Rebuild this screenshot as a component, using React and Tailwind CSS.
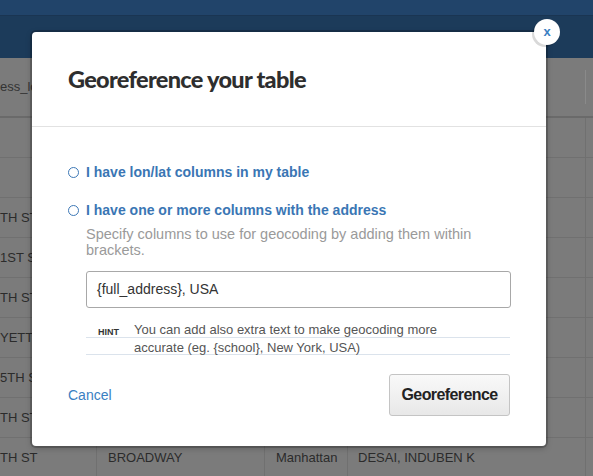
import React from "react";

const rows = [
  { a: "", b: "", c: "", d: "" },
  { a: "", b: "", c: "", d: "" },
  { a: "TH ST", b: "", c: "", d: "" },
  { a: "1ST ST", b: "", c: "", d: "" },
  { a: "TH ST", b: "", c: "", d: "" },
  { a: "YETTE", b: "", c: "", d: "" },
  { a: "5TH ST", b: "", c: "", d: "" },
  { a: "TH ST", b: "", c: "", d: "" },
  { a: "TH ST", b: "BROADWAY", c: "Manhattan", d: "DESAI, INDUBEN K" },
];

function Radio({ label }) {
  return (
    <label className="flex items-center gap-[7px] h-[20px]">
      <span className="w-[11px] h-[11px] rounded-full border-[1.5px] border-[#3d78b6] bg-white shrink-0" />
      <span className="text-[14px] font-bold text-[#3a76b4]">{label}</span>
    </label>
  );
}

export default function App() {
  return (
    <div
      className="relative w-[593px] h-[476px] overflow-hidden bg-[#7b7b7b]"
      style={{ fontFamily: '"Liberation Sans", Arial, Helvetica, sans-serif' }}
    >
      {/* top bar */}
      <div className="h-[58px] flex flex-col">
        <div className="h-[16px] bg-[#21446a] border-b border-[#1a3552]" />
        <div className="flex-1 bg-[#1c3b5a]" />
      </div>

      {/* table */}
      <div className="grid grid-cols-[97px_168px_83px_238px_1fr]">
        <div className="col-span-5 grid grid-cols-[97px_168px_83px_238px_1fr] h-[60px] border-b-2 border-[#6a6a6a]">
          <div className="flex items-center text-[13px] text-[#333] overflow-hidden whitespace-nowrap">ess_lo</div>
          <div />
          <div />
          <div className="border-r border-[#8a8a8a] my-[12px]" />
          <div />
        </div>
        {rows.map((r, i) => (
          <React.Fragment key={i}>
            <div className="h-[40px] border-b border-r border-[#707070] flex items-center text-[13px] text-[#2b2b2b] overflow-hidden whitespace-nowrap">{r.a}</div>
            <div className="h-[40px] border-b border-r border-[#707070] flex items-center pl-[11px] text-[13px] text-[#2b2b2b] whitespace-nowrap">{r.b}</div>
            <div className="h-[40px] border-b border-r border-[#707070] flex items-center pl-[11px] text-[13px] text-[#2b2b2b] whitespace-nowrap">{r.c}</div>
            <div className="h-[40px] border-b border-r border-[#707070] flex items-center pl-[10px] text-[13px] text-[#2b2b2b] whitespace-nowrap">{r.d}</div>
            <div className="h-[40px] border-b border-[#707070]" />
          </React.Fragment>
        ))}
      </div>

      {/* modal */}
      <div className="absolute left-[32px] top-[32px] w-[514px] h-[414px] bg-white rounded-[4px] shadow-[0_0_0_2px_rgba(0,0,0,0.18),0_2px_6px_rgba(0,0,0,0.25)]">
        <div className="h-[95px] flex items-center px-[36px] border-b border-[#e2e2e2]">
          <h1
            className="text-[23.5px] font-black text-[#2e2e2e] tracking-[-0.7px] pt-[2px]"
            style={{ fontFamily: 'Lato, "Liberation Sans", Arial, sans-serif' }}
          >
            Georeference your table
          </h1>
        </div>

        <div className="px-[36px] pt-[35px]">
          <Radio label="I have lon/lat columns in my table" />
          <div className="mt-[18px]">
            <Radio label="I have one or more columns with the address" />
          </div>
          <div className="pl-[18px]">
            <p className="mt-[6px] text-[14.5px] leading-[16px] text-[#9a9a9a] pr-[20px]">
              Specify columns to use for geocoding by adding them within brackets.
            </p>
            <div className="mt-[13px] h-[37px] border border-[#a8a8a8] rounded-[3px] flex items-center px-[10px] text-[14px] text-[#333] mr-[-1px]">
              {"{full_address}, USA"}
            </div>
            <div className="relative mt-[13px] flex">
              <div className="absolute left-0 right-0 top-[16px] h-px bg-[#dbe3ec]" />
              <div className="absolute left-0 right-0 top-[33px] h-px bg-[#dbe3ec]" />
              <span className="w-[48px] pl-[12px] pt-[5px] text-[9px] font-bold text-[#333] leading-[12px] shrink-0">HINT</span>
              <p className="relative text-[13px] leading-[18px] text-[#555]">
                You can add also extra text to make geocoding more
                <br />
                accurate (eg. {"{school}"}, New York, USA)
              </p>
            </div>
          </div>

          <div className="mt-[17px] flex items-center justify-between">
            <a className="text-[14px] text-[#3a80c2] pt-[1px]">Cancel</a>
            <button className="w-[121px] h-[42px] rounded-[3px] border border-[#c4c4c4] bg-gradient-to-b from-[#f9f9f9] to-[#e8e8e8] text-[16px] font-bold text-[#222] tracking-[-0.6px]">
              Georeference
            </button>
          </div>
        </div>

        {/* close */}
        <div className="absolute right-[-14px] top-[-13px] w-[26px] h-[26px] rounded-full bg-white flex items-center justify-center shadow-[-2px_2px_0_rgba(0,0,0,0.15)]">
          <span className="text-[13px] font-bold text-[#3a80c2] leading-none -mt-[1px]">x</span>
        </div>
      </div>
    </div>
  );
}
